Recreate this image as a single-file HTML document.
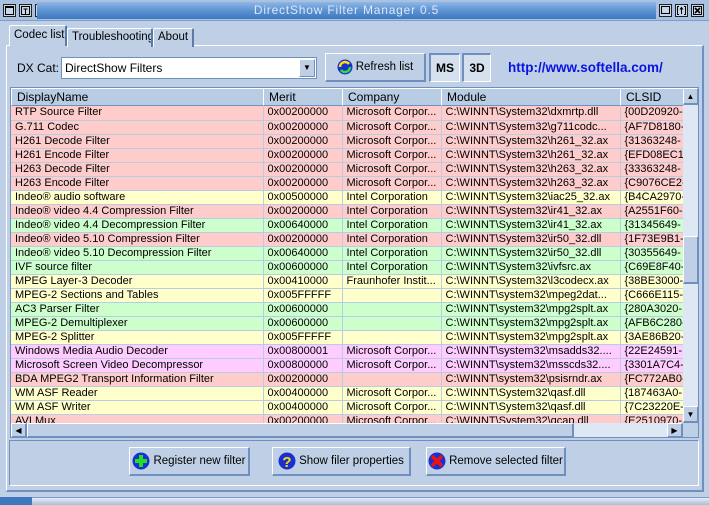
<!DOCTYPE html>
<html><head><meta charset="utf-8"><style>
*{margin:0;padding:0;box-sizing:border-box}
body{width:709px;height:505px;overflow:hidden;background:#bfd0e6;font-family:"Liberation Sans",sans-serif;font-size:11px;color:#000;position:relative}
.a{position:absolute}
.tb{left:0;top:0;width:709px;height:21px;background:#a9c2e2;border-bottom:1px solid #7a9cc8}
.tg{left:37px;top:2px;width:619px;height:17px;background:linear-gradient(#8fb6e6,#5c93d2 50%,#3d78bf);color:#dde8f6;font-size:12px;text-align:center;line-height:17px;letter-spacing:0.8px}
.wb{top:4px;width:13px;height:13px;background:#c8d6ea;border:1px solid #222;overflow:hidden}
.tab{height:19px;border:1px solid #fff;border-right:2px solid #5a7aa8;border-bottom:none;background:#bfd0e6;font-size:11.5px;line-height:17px;padding-left:4px;border-radius:2px 2px 0 0;white-space:nowrap;overflow:hidden}
.panel{left:6px;top:45px;width:698px;height:447px;border:1px solid #fff;border-right:2px solid #6f8fbf;border-bottom:2px solid #6f8fbf}
.btn{background:#bfd0e6;border:1px solid #fff;border-right:2px solid #6f8fbf;border-bottom:2px solid #6f8fbf;font-size:11.5px;display:flex;align-items:center;justify-content:center;gap:3px;white-space:nowrap}
.list{left:10px;top:87px;width:689px;height:351px;border:1px solid #6f8fbf;background:#fff;overflow:hidden}
.hdr{left:0;top:0;height:18px;background:#b8cce4;border-right:1px solid #6f8fbf;border-left:1px solid #fff;border-top:1px solid #fff;border-bottom:1px solid #6f8fbf;font-size:12px;line-height:16px;padding-left:5px}
table{position:absolute;left:0;top:18px;border-collapse:collapse;font-size:11px}
td{height:14px;padding:0 0 0 4px;border-right:1px solid #b8cce4;border-bottom:1px solid #b8cce4;white-space:nowrap;overflow:hidden;line-height:13px;max-width:0}
tr.p td{background:#ffcccc}tr.y td{background:#ffffcc}tr.g td{background:#ccffcc}tr.m td{background:#ffccff}
</style></head><body>
<div class="a tb"></div>
<div class="a wb" style="left:3px"><svg width="11" height="11"><rect x="1.5" y="1.5" width="8" height="8" fill="none" stroke="#000"/><rect x="1" y="1" width="9" height="2" fill="#000"/></svg></div>
<div class="a wb" style="left:19px"><svg width="11" height="11"><rect x="1.5" y="1.5" width="8" height="8" fill="none" stroke="#000"/><path d="M3.5 4h4M5.5 4v5" stroke="#000"/></svg></div>
<div class="a wb" style="left:35px"><svg width="11" height="11"><rect x="1.5" y="1.5" width="8" height="8" fill="none" stroke="#000"/><path d="M5.5 2v7M2 5.5h7" stroke="#000"/></svg></div>
<div class="a tg">DirectShow Filter Manager 0.5</div>
<div class="a wb" style="left:659px"><svg width="11" height="11"><rect x="1.5" y="1.5" width="8" height="7" fill="none" stroke="#000"/></svg></div>
<div class="a wb" style="left:675px"><svg width="11" height="11"><path d="M3 1.5H1.5v8H3M8 1.5h1.5v8H8M5.5 9V3M4 4.5l1.5-2 1.5 2" stroke="#000" fill="none"/></svg></div>
<div class="a wb" style="left:691px"><svg width="11" height="11"><rect x="1.5" y="1.5" width="8" height="8" fill="none" stroke="#000"/><path d="M3 3l5 5M8 3l-5 5" stroke="#000" stroke-width="1.6"/></svg></div>

<div class="a panel"></div>
<div class="a tab" style="left:9px;top:25px;width:58px;height:21px;border-bottom:none;z-index:2;line-height:19px">Codec list</div>
<div class="a tab" style="left:67px;top:28px;width:86px">Troubleshooting</div>
<div class="a tab" style="left:153px;top:28px;width:41px">About</div>

<div class="a" style="left:17px;top:61px;font-size:12px">DX Cat:</div>
<div class="a" style="left:61px;top:57px;width:256px;height:22px;background:#fff;border:1px solid #6f8fbf;font-size:12px;line-height:20px;padding-left:3px">DirectShow Filters
<div class="a" style="right:1px;top:1px;width:16px;height:18px;background:#bfd0e6;border:1px solid #fff;border-right-color:#6f8fbf;border-bottom-color:#6f8fbf;font-size:8px;line-height:16px;text-align:center">▼</div></div>
<div class="a btn" style="left:325px;top:53px;width:101px;height:29px"><svg width="16" height="16"><circle cx="8" cy="8" r="7.5" fill="#1a2fd0"/><path d="M3 8a5 5 0 0 1 9-3" stroke="#ffe000" stroke-width="2.5" fill="none"/><path d="M13 8a5 5 0 0 1-9 3" stroke="#30e030" stroke-width="2.5" fill="none"/></svg>Refresh list</div>
<div class="a btn" style="left:429px;top:53px;width:31px;height:29px;font-weight:bold;font-size:12px;background:#d4e0ee;border-color:#6f8fbf #fff #fff #6f8fbf;border-width:2px 1px 1px 2px">MS</div>
<div class="a btn" style="left:462px;top:53px;width:29px;height:29px;font-weight:bold;font-size:12px;background:#d4e0ee;border-color:#6f8fbf #fff #fff #6f8fbf;border-width:2px 1px 1px 2px">3D</div>
<div class="a" style="left:508px;top:60px;color:#0a14e0;font-weight:bold;font-size:13.5px">http://www.softella.com/</div>

<div class="a list">
<div class="a hdr" style="left:0;width:253px">DisplayName</div>
<div class="a hdr" style="left:252px;width:80px">Merit</div>
<div class="a hdr" style="left:331px;width:100px">Company</div>
<div class="a hdr" style="left:430px;width:180px">Module</div>
<div class="a hdr" style="left:609px;width:64px">CLSID</div>
<table>
<colgroup><col style="width:252px"><col style="width:79px"><col style="width:99px"><col style="width:179px"><col style="width:63px"></colgroup>
<tr class="p"><td>RTP Source Filter</td><td>0x00200000</td><td>Microsoft Corpor...</td><td>C:\WINNT\System32\dxmrtp.dll</td><td>{00D20920-</td></tr>
<tr class="p"><td>G.711 Codec</td><td>0x00200000</td><td>Microsoft Corpor...</td><td>C:\WINNT\System32\g711codc...</td><td>{AF7D8180-</td></tr>
<tr class="p"><td>H261 Decode Filter</td><td>0x00200000</td><td>Microsoft Corpor...</td><td>C:\WINNT\System32\h261_32.ax</td><td>{31363248-</td></tr>
<tr class="p"><td>H261 Encode Filter</td><td>0x00200000</td><td>Microsoft Corpor...</td><td>C:\WINNT\System32\h261_32.ax</td><td>{EFD08EC1</td></tr>
<tr class="p"><td>H263 Decode Filter</td><td>0x00200000</td><td>Microsoft Corpor...</td><td>C:\WINNT\System32\h263_32.ax</td><td>{33363248-</td></tr>
<tr class="p"><td>H263 Encode Filter</td><td>0x00200000</td><td>Microsoft Corpor...</td><td>C:\WINNT\System32\h263_32.ax</td><td>{C9076CE2-</td></tr>
<tr class="y"><td>Indeo® audio software</td><td>0x00500000</td><td>Intel Corporation</td><td>C:\WINNT\System32\iac25_32.ax</td><td>{B4CA2970-</td></tr>
<tr class="p"><td>Indeo® video 4.4 Compression Filter</td><td>0x00200000</td><td>Intel Corporation</td><td>C:\WINNT\System32\ir41_32.ax</td><td>{A2551F60-</td></tr>
<tr class="g"><td>Indeo® video 4.4 Decompression Filter</td><td>0x00640000</td><td>Intel Corporation</td><td>C:\WINNT\System32\ir41_32.ax</td><td>{31345649-</td></tr>
<tr class="p"><td>Indeo® video 5.10 Compression Filter</td><td>0x00200000</td><td>Intel Corporation</td><td>C:\WINNT\System32\ir50_32.dll</td><td>{1F73E9B1-</td></tr>
<tr class="g"><td>Indeo® video 5.10 Decompression Filter</td><td>0x00640000</td><td>Intel Corporation</td><td>C:\WINNT\System32\ir50_32.dll</td><td>{30355649-</td></tr>
<tr class="g"><td>IVF source filter</td><td>0x00600000</td><td>Intel Corporation</td><td>C:\WINNT\System32\ivfsrc.ax</td><td>{C69E8F40-</td></tr>
<tr class="y"><td>MPEG Layer-3 Decoder</td><td>0x00410000</td><td>Fraunhofer Instit...</td><td>C:\WINNT\System32\l3codecx.ax</td><td>{38BE3000-</td></tr>
<tr class="y"><td>MPEG-2 Sections and Tables</td><td>0x005FFFFF</td><td></td><td>C:\WINNT\system32\mpeg2dat...</td><td>{C666E115-</td></tr>
<tr class="g"><td>AC3 Parser Filter</td><td>0x00600000</td><td></td><td>C:\WINNT\system32\mpg2splt.ax</td><td>{280A3020-</td></tr>
<tr class="g"><td>MPEG-2 Demultiplexer</td><td>0x00600000</td><td></td><td>C:\WINNT\system32\mpg2splt.ax</td><td>{AFB6C280-</td></tr>
<tr class="y"><td>MPEG-2 Splitter</td><td>0x005FFFFF</td><td></td><td>C:\WINNT\system32\mpg2splt.ax</td><td>{3AE86B20-</td></tr>
<tr class="m"><td>Windows Media Audio Decoder</td><td>0x00800001</td><td>Microsoft Corpor...</td><td>C:\WINNT\system32\msadds32....</td><td>{22E24591-</td></tr>
<tr class="m"><td>Microsoft Screen Video Decompressor</td><td>0x00800000</td><td>Microsoft Corpor...</td><td>C:\WINNT\system32\msscds32....</td><td>{3301A7C4-</td></tr>
<tr class="p"><td>BDA MPEG2 Transport Information Filter</td><td>0x00200000</td><td></td><td>C:\WINNT\system32\psisrndr.ax</td><td>{FC772AB0-</td></tr>
<tr class="y"><td>WM ASF Reader</td><td>0x00400000</td><td>Microsoft Corpor...</td><td>C:\WINNT\System32\qasf.dll</td><td>{187463A0-</td></tr>
<tr class="y"><td>WM ASF Writer</td><td>0x00400000</td><td>Microsoft Corpor...</td><td>C:\WINNT\System32\qasf.dll</td><td>{7C23220E-</td></tr>
<tr class="p"><td>AVI Mux</td><td>0x00200000</td><td>Microsoft Corpor...</td><td>C:\WINNT\System32\qcap.dll</td><td>{E2510970-</td></tr>
</table>
<div class="a" style="left:672px;top:0;width:16px;height:335px;background:#dde8f4"></div>
<div class="a btn" style="left:672px;top:0;width:16px;height:17px;font-size:8px">▲</div>
<div class="a btn" style="left:672px;top:148px;width:16px;height:48px"></div>
<div class="a btn" style="left:672px;top:318px;width:16px;height:17px;font-size:8px">▼</div>
<div class="a" style="left:0;top:335px;width:672px;height:16px;background:#dde8f4"></div>
<div class="a btn" style="left:0;top:335px;width:16px;height:15px;font-size:8px">◀</div>
<div class="a btn" style="left:16px;top:335px;width:547px;height:15px"></div>
<div class="a btn" style="left:656px;top:335px;width:16px;height:15px;font-size:8px">▶</div>
<div class="a" style="left:672px;top:335px;width:16px;height:16px;background:#bfd0e6"></div>
</div>

<div class="a" style="left:9px;top:440px;width:690px;height:46px;border:1px solid #6f8fbf;border-right-color:#fff;border-bottom-color:#fff"></div>
<div class="a btn" style="left:129px;top:447px;width:121px;height:29px"><svg width="18" height="18"><circle cx="9" cy="9" r="8.5" fill="#1a2fd0"/><path d="M7 3h4v4h4v4h-4v4H7v-4H3V7h4z" fill="#20e020"/></svg>Register new filter</div>
<div class="a btn" style="left:272px;top:447px;width:139px;height:29px"><svg width="18" height="18"><circle cx="9" cy="9" r="8.5" fill="#1a2fd0"/><text x="9" y="15" font-size="15" font-weight="bold" text-anchor="middle" fill="#ffe000" font-family="Liberation Sans">?</text></svg>Show filer properties</div>
<div class="a btn" style="left:426px;top:447px;width:140px;height:29px"><svg width="18" height="18"><circle cx="9" cy="9" r="8.5" fill="#1a2fd0"/><path d="M4 4l10 10M14 4L4 14" stroke="#f01010" stroke-width="3.5"/></svg>Remove selected filter</div>

<div class="a" style="left:0;top:497px;width:709px;height:8px;background:linear-gradient(#e6eef8,#a8bcd8);border-top:1px solid #7a9cc8"></div>
<div class="a" style="left:0;top:497px;width:32px;height:8px;background:#3d78bf"></div>
</body></html>
